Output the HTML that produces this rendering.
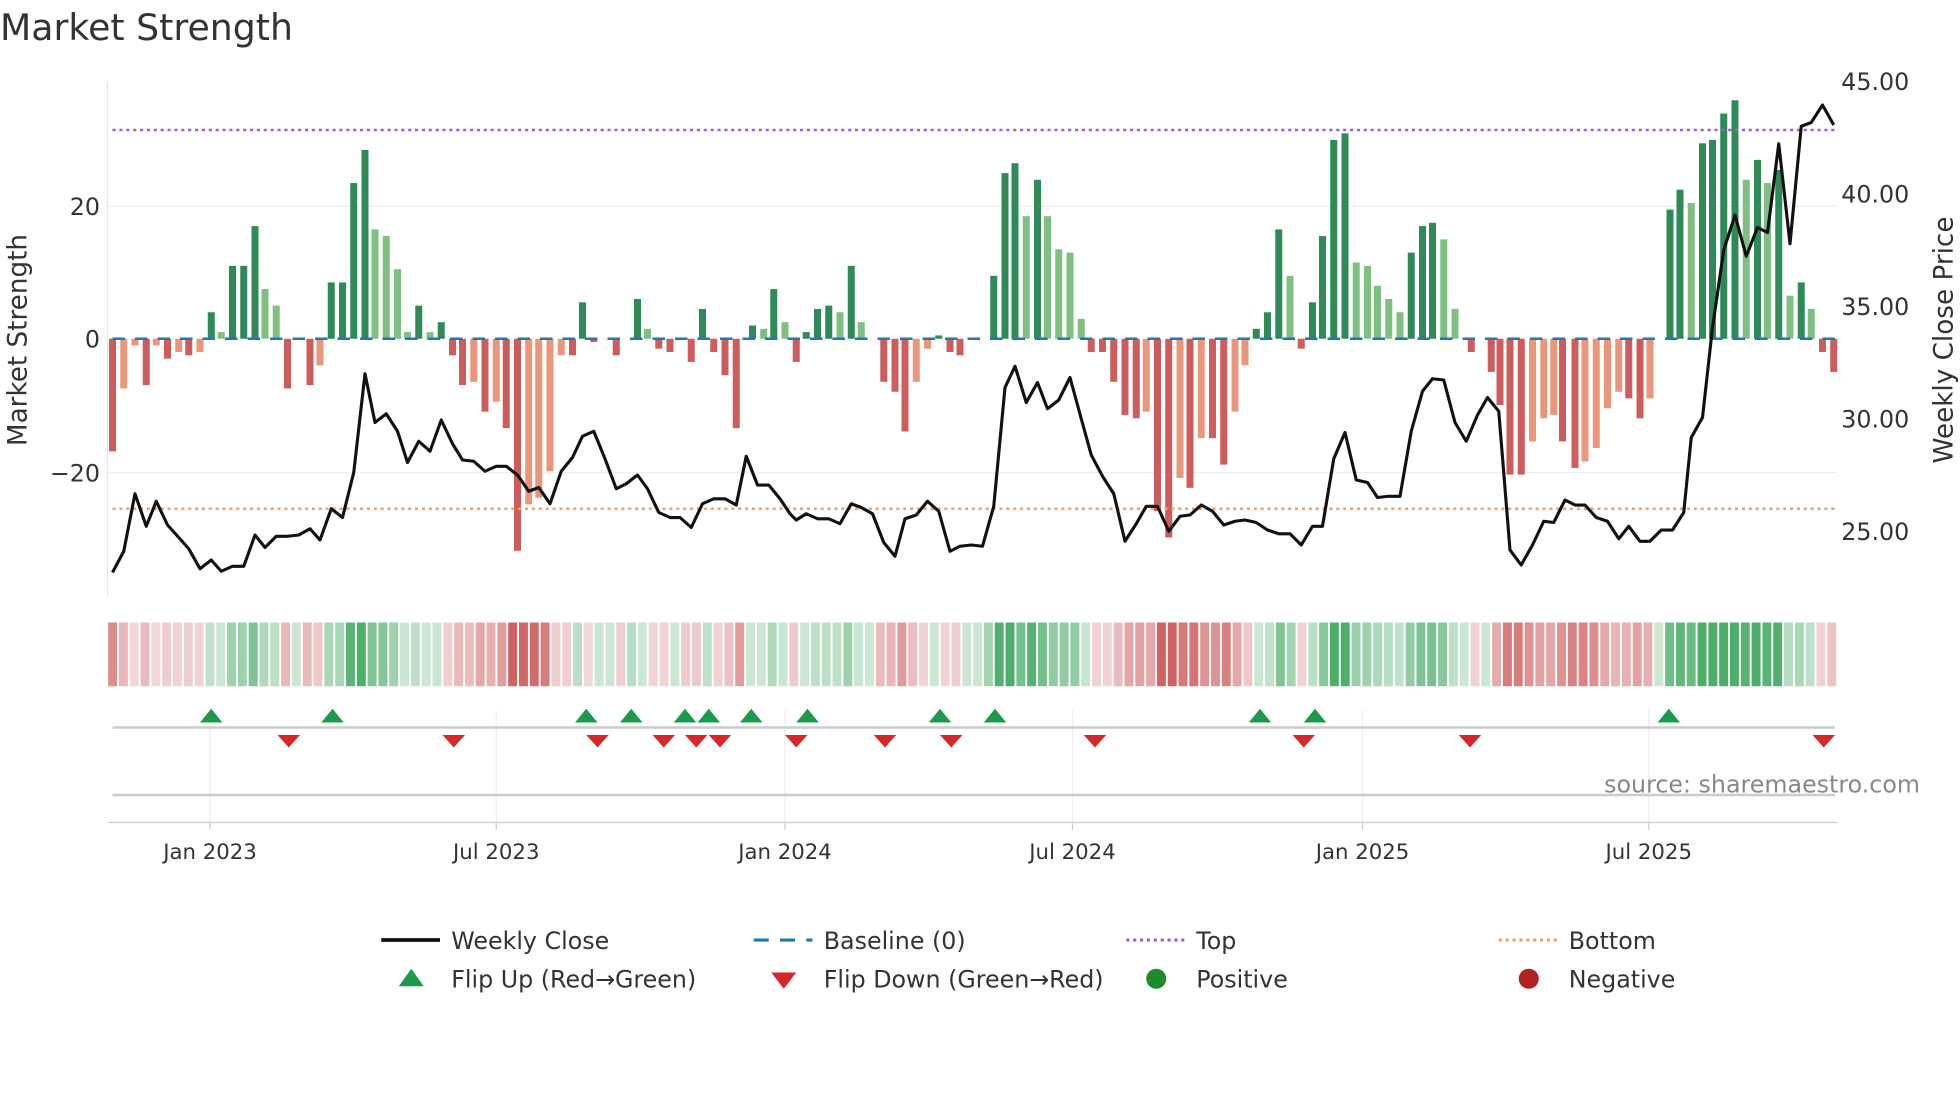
<!DOCTYPE html>
<html><head><meta charset="utf-8"><style>
html,body{margin:0;padding:0;background:#fff;width:1960px;height:1102px;overflow:hidden}
svg{display:block;font-family:"DejaVu Sans","Liberation Sans",sans-serif}
</style></head><body>
<svg id="s" width="1960" height="1102" viewBox="0 0 1568 881.6" xmlns="http://www.w3.org/2000/svg">
<text x="0" y="32" font-size="29" fill="#333">Market Strength</text>
<g stroke="#eceef0" stroke-width="1">
<line x1="86" y1="165" x2="1470" y2="165"/><line x1="86" y1="378" x2="1470" y2="378"/>
</g>
<line x1="86" y1="65" x2="86" y2="478" stroke="#e6e6e6"/>
<g id="bars"></g>
<line x1="90" y1="271" x2="1468" y2="271" stroke="#1f77b4" stroke-width="2" stroke-dasharray="10,8"/>
<line x1="90" y1="104" x2="1468" y2="104" stroke="#9b5de5" stroke-width="2" stroke-dasharray="2.5,3"/>
<line x1="90" y1="407" x2="1468" y2="407" stroke="#f4a261" stroke-width="2" stroke-dasharray="2.5,3"/>
<polyline id="price" fill="none" stroke="#111" stroke-width="2.5" stroke-linejoin="round"/>
<g font-size="19" fill="#333">
<text x="80" y="172" text-anchor="end">20</text>
<text x="80" y="278" text-anchor="end">0</text>
<text x="80" y="385" text-anchor="end">−20</text>
<text x="1473" y="72">45.00</text><text x="1473" y="162">40.00</text><text x="1473" y="252">35.00</text><text x="1473" y="342">30.00</text><text x="1473" y="432">25.00</text>
<text transform="translate(21,272) rotate(-90)" text-anchor="middle" font-size="21">Market Strength</text>
<text transform="translate(1562,272) rotate(-90)" text-anchor="middle" font-size="21">Weekly Close Price</text>
</g>
<g id="heat"></g>
<g stroke="#eee"><line x1="168" y1="568" x2="168" y2="658"/><line x1="397" y1="568" x2="397" y2="658"/><line x1="628" y1="568" x2="628" y2="658"/><line x1="858" y1="568" x2="858" y2="658"/><line x1="1090" y1="568" x2="1090" y2="658"/><line x1="1319" y1="568" x2="1319" y2="658"/></g>
<line x1="90" y1="582" x2="1468" y2="582" stroke="#ccc" stroke-width="2"/>
<line x1="90" y1="636" x2="1468" y2="636" stroke="#ccc" stroke-width="2"/>
<g id="mk"></g>
<text x="1536" y="634" text-anchor="end" font-size="19" fill="#888">source: sharemaestro.com</text>
<line x1="86" y1="658" x2="1470" y2="658" stroke="#ccc"/>
<g font-size="17" fill="#333" text-anchor="middle">
<g stroke="#ccc"><line x1="168" y1="658" x2="168" y2="664"/><line x1="397" y1="658" x2="397" y2="664"/><line x1="628" y1="658" x2="628" y2="664"/><line x1="858" y1="658" x2="858" y2="664"/><line x1="1090" y1="658" x2="1090" y2="664"/><line x1="1319" y1="658" x2="1319" y2="664"/></g>
<text x="168" y="687">Jan 2023</text><text x="397" y="687">Jul 2023</text><text x="628" y="687">Jan 2024</text><text x="858" y="687">Jul 2024</text><text x="1090" y="687">Jan 2025</text><text x="1319" y="687">Jul 2025</text>
</g>
<g font-size="19" fill="#333">
<line x1="305" y1="752" x2="352" y2="752" stroke="#111" stroke-width="3"/><text x="361" y="759">Weekly Close</text>
<line x1="603" y1="752" x2="650" y2="752" stroke="#1f77b4" stroke-width="2.5" stroke-dasharray="12,9"/><text x="659" y="759">Baseline (0)</text>
<line x1="901" y1="752" x2="948" y2="752" stroke="#9b5de5" stroke-width="2.5" stroke-dasharray="2.5,3"/><text x="957" y="759">Top</text>
<line x1="1199" y1="752" x2="1246" y2="752" stroke="#f4a261" stroke-width="2.5" stroke-dasharray="2.5,3"/><text x="1255" y="759">Bottom</text>
<polygon points="319,789 329,775 339,789" fill="#1a9a4a"/><text x="361" y="790">Flip Up (Red→Green)</text>
<polygon points="617,778 637,778 627,791" fill="#d62828"/><text x="659" y="790">Flip Down (Green→Red)</text>
<circle cx="925" cy="783" r="8" fill="#1f8a2a"/><text x="957" y="790">Positive</text>
<circle cx="1223" cy="783" r="8" fill="#b22222"/><text x="1255" y="790">Negative</text>
</g>
</svg>
<script>
var B=[[90,-17],[99,-7.5],[108,-1],[117,-7],[125,-1],[134,-3],[143,-2],[151,-2.5],[160,-2],[169,4],[177,1],[186,11],[195,11],[204,17],[212,7.5],[221,5],[230,-7.5],[239,0],[248,-7],[256,-4],[265,8.5],[274,8.5],[283,23.5],[292,28.5],[300,16.5],[309,15.5],[318,10.5],[326,1],[335,5],[344,1],[353,2.5],[362,-2.5],[370,-7],[379,-6.5],[388,-11],[397,-9.5],[405,-13.5],[414,-32],[423,-25],[431,-24],[440,-20],[449,-2.5],[458,-2.5],[466,5.5],[475,-0.5],[484,0],[493,-2.5],[501,0],[510,6],[518,1.5],[527,-1.5],[536,-2],[544,0],[553,-3.5],[562,4.5],[571,-2],[580,-5.5],[589,-13.5],[597,0],[602,2],[611,1.5],[619,7.5],[628,2.5],[637,-3.5],[645,1],[654,4.5],[663,5],[672,4],[681,11],[689,2.5],[698,0],[707,-6.5],[716,-8],[724,-14],[733,-6.5],[742,-1.5],[751,0.5],[760,-2],[768,-2.5],[777,0],[786,0],[795,9.5],[804,25],[812,26.5],[821,18.5],[830,24],[838,18.5],[847,13.5],[856,13],[865,3],[873,-2],[882,-2],[891,-6.5],[900,-11.5],[909,-12],[917,-11],[926,-26],[935,-30],[944,-21],[952,-22.5],[961,-15],[970,-15],[979,-19],[988,-11],[996,-4],[1005,1.5],[1014,4],[1023,16.5],[1032,9.5],[1041,-1.5],[1050,5.5],[1058,15.5],[1067,30],[1076,31],[1085,11.5],[1094,11],[1102,8],[1111,6],[1120,4],[1129,13],[1138,17],[1146,17.5],[1155,15],[1164,4.5],[1173,0],[1177,-2],[1186,0],[1193,-5],[1200,-10],[1208,-20.5],[1217,-20.5],[1226,-15.5],[1235,-12],[1243,-11.5],[1250,-15.5],[1260,-19.5],[1268,-18.5],[1277,-16.5],[1286,-10.5],[1295,-8],[1303,-9],[1312,-12],[1320,-9],[1330,0],[1336,19.5],[1344,22.5],[1353,20.5],[1362,29.5],[1370,30],[1379,34],[1388,36],[1397,24],[1406,27],[1414,23.5],[1423,25.5],[1432,6.5],[1441,8.5],[1449,4.5],[1458,-2],[1467,-5]];
var ns="http://www.w3.org/2000/svg",bars=document.getElementById('bars'),heat=document.getElementById('heat');
function el(p,t,a){var e=document.createElementNS(ns,t);for(var k in a)e.setAttribute(k,a[k]);p.appendChild(e);return e;}
var prev=0;
B.forEach(function(b,i){var v=b[1],x=b[0],h=Math.abs(v)*5.3,c;
 if(v>=0)c=(v>=prev)?'#2e8b57':'#7fbf7f';else c=(v<=prev)?'#cd5c5c':'#e9967a';
 if(v!=0)el(bars,'rect',{x:x-2.8,y:v>0?271-h:271,width:5.6,height:h,fill:c});
 prev=v;});
var W=(1470-86)/160;
for(var i=0;i<160;i++){var x=86+i*W,xi=x+W/2,best=B[0];B.forEach(function(b){if(Math.abs(b[0]-xi)<Math.abs(best[0]-xi))best=b;});
 var v=best[1],a=Math.min(0.85,0.2+Math.abs(v)/40),c=v>=0?'rgba(46,160,80,'+a+')':'rgba(200,70,70,'+a+')';
 if(v>=0&&v<2)c='rgba(46,160,80,0.25)';
 el(heat,'rect',{x:x+0.5,y:498,width:W-1.5,height:51,fill:c});}
var P="90,458 99,441 108,395 117,421 125,401 134,420 143,430 151,439 160,455 169,448 177,457 186,453 195,453 204,428 212,438 221,429 230,429 239,428 248,423 256,432 265,407 274,414 283,378 292,299 300,338 309,331 318,345 326,370 335,353 344,361 353,336 362,355 370,368 379,369 388,377 397,373 405,373 414,380 423,393 431,390 440,403 449,377 458,366 466,349 475,345 484,367 493,391 501,387 510,380 518,391 527,410 536,414 544,414 553,422 562,403 571,399 580,399 589,404 597,365 606,388 615,388 624,399 632,411 637,416 645,411 654,415 663,415 672,419 681,403 689,406 698,411 707,434 716,445 724,415 733,412 742,401 751,409 760,441 768,437 777,436 786,437 795,405 804,310 812,293 821,322 830,306 838,327 847,320 856,302 865,335 873,364 882,381 891,395 900,433 909,419 917,405 926,405 935,425 944,413 952,412 961,404 970,409 979,420 988,417 996,416 1005,418 1014,424 1023,427 1032,427 1041,436 1050,421 1058,421 1067,367 1076,346 1085,384 1094,386 1102,398 1111,397 1120,397 1129,345 1138,313 1146,303 1155,304 1164,338 1173,353 1182,332 1190,318 1199,329 1208,440 1217,452 1226,436 1235,417 1243,418 1252,400 1260,404 1268,404 1277,414 1286,417 1295,431 1303,421 1312,433 1320,433 1329,424 1338,424 1347,410 1353,350 1362,334 1370,262 1379,200 1388,172 1397,205 1406,182 1414,186 1423,115 1432,195 1441,101 1449,98 1458,84 1467,100";
document.getElementById('price').setAttribute('points',P);
var mk=document.getElementById('mk');
[169,266,469,505,548,567,601,646,752,796,1008,1052,1335].forEach(function(x){el(mk,'polygon',{points:(x-9)+',578 '+x+',567 '+(x+9)+',578',fill:'#1a9a4a'});});
[231,363,478,531,557,576,637,708,761,876,1043,1176,1459].forEach(function(x){el(mk,'polygon',{points:(x-9)+',588 '+(x+9)+',588 '+x+',598',fill:'#d62828'});});
</script>
</body></html>
